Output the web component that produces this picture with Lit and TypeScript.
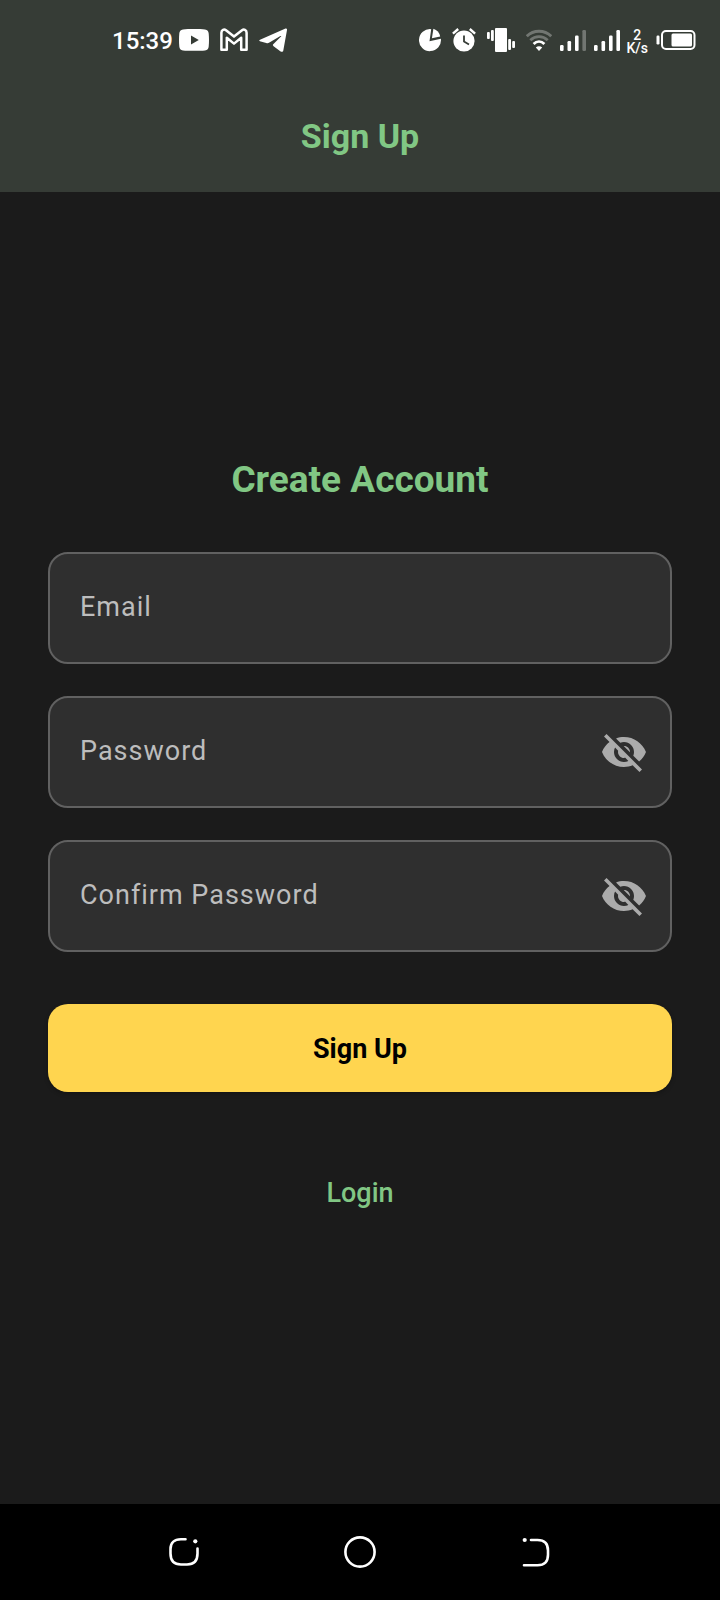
import { LitElement, html, css, svg } from "lit";
import { customElement, property, state } from "lit/decorators.js";

const visibilityOff = svg`<path d="M12 7c2.76 0 5 2.24 5 5 0 .65-.13 1.26-.36 1.83l2.92 2.92c1.51-1.26 2.7-2.89 3.43-4.75-1.73-4.39-6-7.5-11-7.5-1.4 0-2.74.25-3.98.7l2.16 2.16C10.74 7.13 11.35 7 12 7zM2 4.27l2.28 2.28.46.46C3.08 8.3 1.78 10.02 1 12c1.73 4.39 6 7.5 11 7.5 1.55 0 3.03-.3 4.38-.84l.42.42L19.73 22 21 20.73 3.27 3 2 4.27zM7.53 9.8l1.55 1.55c-.05.21-.08.43-.08.65 0 1.66 1.34 3 3 3 .22 0 .44-.03.65-.08l1.55 1.55c-.67.33-1.41.53-2.2.53-2.76 0-5-2.24-5-5 0-.79.2-1.53.53-2.2zm4.31-.78l3.15 3.15.02-.16c0-1.66-1.34-3-3-3l-.17.01z"/>`;
const visibilityOn = svg`<path d="M12 4.5C7 4.5 2.73 7.61 1 12c1.73 4.39 6 7.5 11 7.5s9.27-3.11 11-7.5c-1.73-4.39-6-7.5-11-7.5zM12 17c-2.76 0-5-2.24-5-5s2.24-5 5-5 5 2.24 5 5-2.24 5-5 5zm0-8c-1.66 0-3 1.34-3 3s1.34 3 3 3 3-1.34 3-3-1.34-3-3-3z"/>`;

@customElement("status-bar")
export class StatusBar extends LitElement {
  static styles = css`
    :host {
      display: flex;
      justify-content: space-between;
      align-items: center;
      height: 80px;
      padding: 0 24px 0 112px;
      color: #fff;
      font-family: Roboto, sans-serif;
    }
    .group {
      display: flex;
      align-items: center;
    }
    .apps {
      gap: 11px;
    }
    .clock {
      font-size: 24px;
      line-height: 28px;
      font-weight: 500;
      padding-top: 2px;
      margin-right: -5px;
    }
    .system {
      gap: 8px;
    }
    .alerts {
      gap: 11px;
    }
    .speed {
      font-size: 14px;
      line-height: 13px;
      font-weight: 500;
      text-align: center;
      padding-top: 3px;
      margin-left: -2px;
    }
    svg {
      display: block;
      fill: currentColor;
    }
  `;

  render() {
    return html`
      <div class="group apps">
        <time class="clock">15:39</time>
        <svg width="30" height="24" viewBox="0 0 30 24" aria-label="YouTube">
          <path fill-rule="evenodd" d="M4 1.4C9 .8 21 .8 26 1.4c2.500.3 3.500 1.600 3.700 4 .4 4 .4 9 0 13-.2 2.400-1.200 3.700-3.700 4-5 .6-17 .6-22 0-2.500-.3-3.500-1.600-3.700-4-.4-4-.4-9 0-13C.5 3 1.500 1.700 4 1.400zM12 7.400v9l7.800-4.500z"/>
        </svg>
        <svg width="28" height="24" viewBox="0 0 28 24" aria-label="Gmail">
          <path fill="none" stroke="currentColor" stroke-width="2.500" stroke-linejoin="round" d="M1.400 21.800V4.800C1.400 1.600 4.200.9 6 2.200l8 6.400 8-6.400c1.800-1.300 4.600-.6 4.600 2.600v17h-5.400V9.800L14 15.600 6.800 9.800v12z"/>
        </svg>
        <svg width="28" height="24" viewBox="0 0 28 24" aria-label="Telegram">
          <path d="M1 11.800 26.500.6c1-.4 1.700.2 1.500 1.300l-3.700 20.500c-.3 1.500-1.500 1.800-2.700 1l-7-5.200c-1-.8-1-1.500-.1-2.300L22 8.600c.5-.6 0-.9-.6-.5L10 14.800c-1 .6-1.700.5-2.800.2L.9 13.200c-1-.4-1-.9.100-1.400z"/>
        </svg>
      </div>
      <div class="group system">
        <div class="group alerts">
          <svg width="22" height="24" viewBox="0 0 22 24" aria-label="Data usage">
            <path d="M12.200 1.200A11 11 0 1 0 21.900 10.800L10.500 13.200z"/>
            <path d="M14.400.8A10.600 10.600 0 0 1 21.200 8.400L12.900 10.300z"/>
          </svg>
          <svg width="24" height="24" viewBox="0 0 24 24" aria-label="Alarm">
            <circle cx="12" cy="13" r="10.600"/>
            <path fill="none" stroke="currentColor" stroke-width="2.400" d="M.9 5.600 6.200 1M23.100 5.600 17.800 1"/>
            <path fill="none" stroke="#363c36" stroke-width="1.800" d="M12 7.500v6l5 3"/>
          </svg>
          <svg width="28" height="24" viewBox="0 0 28 24" aria-label="Vibrate">
            <rect x="8" width="12" height="24" rx="1"/>
            <rect y="4" width="2.800" height="7" rx="1"/>
            <rect x="4" y="2" width="2.800" height="11" rx="1"/>
            <rect x="21.200" y="11" width="2.800" height="11" rx="1"/>
            <rect x="25.200" y="13" width="2.800" height="7" rx="1"/>
          </svg>
          <svg width="26" height="24" viewBox="0 0 26 24" aria-label="Wi-Fi">
            <g fill="none" stroke="currentColor" stroke-width="2.800">
              <path opacity=".3" d="M.8 8.200C7.500 1.600 18.500 1.600 25.200 8.200"/>
              <path opacity=".3" d="M4.300 12.200c5-4.700 12.400-4.700 17.400 0"/>
              <path d="M7.600 16c3.200-3.100 7.600-3.100 10.800 0"/>
            </g>
            <path d="M9.800 19.400c1.900-1.700 4.500-1.700 6.400 0L13 23z"/>
          </svg>
        </div>
        ${[0.3, 1].map(
          (last) => svg`<svg width="26" height="24" viewBox="0 0 26 24" aria-label="Mobile signal">
            <rect y="17" width="3.600" height="6" rx="1.200"/>
            <rect x="7.500" y="13" width="3.600" height="10" rx="1.200"/>
            <rect x="15" y="7.500" width="3.600" height="15.500" rx="1.200"/>
            <rect x="22.400" y="2" width="3.600" height="21" rx="1.200" opacity=${last}/>
          </svg>`
        )}
        <div class="speed">2<br />K/s</div>
        <svg width="40" height="20" viewBox="0 0 40 20" aria-label="Battery">
          <rect x=".5" y="5.500" width="3" height="9" rx="1.200"/>
          <rect x="6" y="1" width="32.500" height="18" rx="4" fill="none" stroke="currentColor" stroke-width="2"/>
          <rect x="15.500" y="3.500" width="20.500" height="13" rx="1.500"/>
        </svg>
      </div>
    `;
  }
}

@customElement("outlined-field")
export class OutlinedField extends LitElement {
  @property() label = "";
  @property() type = "text";
  @state() private value = "";
  @state() private revealed = false;

  static styles = css`
    :host {
      display: block;
      font-family: Roboto, sans-serif;
    }
    .box {
      display: flex;
      align-items: center;
      box-sizing: border-box;
      height: 112px;
      padding: 0 22px 0 30px;
      background: #2f2f2f;
      border: 2px solid #616161;
      border-radius: 20px;
    }
    .box:focus-within {
      border-color: #81c784;
    }
    .entry {
      display: grid;
      flex: 1;
      align-items: center;
      padding-bottom: 2px;
    }
    .label,
    .input {
      grid-area: 1 / 1;
      font: 400 27px/36px Roboto, sans-serif;
      letter-spacing: 1px;
      color: #bdbdbd;
    }
    .label {
      pointer-events: none;
      z-index: 1;
    }
    .filled {
      opacity: 0;
    }
    .input {
      width: 100%;
      box-sizing: border-box;
      padding: 0;
      border: 0;
      outline: 0;
      background: none;
      color: #fff;
    }
    .toggle {
      padding: 0;
      border: 0;
      background: none;
      color: #ababab;
      cursor: pointer;
    }
    .eye {
      display: block;
      width: 48px;
      height: 48px;
      fill: currentColor;
    }
  `;

  render() {
    const secret = this.type === "password";
    return html`
      <div class="box">
        <div class="entry">
          <label class="label ${this.value ? "filled" : ""}" for="input">${this.label}</label>
          <input
            class="input"
            id="input"
            type=${secret && this.revealed ? "text" : this.type}
            @input=${(e: Event) => (this.value = (e.target as HTMLInputElement).value)}
          />
        </div>
        ${secret
          ? html`<button
              class="toggle"
              type="button"
              aria-label=${this.revealed ? "Hide password" : "Show password"}
              @click=${() => (this.revealed = !this.revealed)}
            >
              <svg class="eye" viewBox="0 0 24 24">${this.revealed ? visibilityOn : visibilityOff}</svg>
            </button>`
          : null}
      </div>
    `;
  }
}

@customElement("navigation-bar")
export class NavigationBar extends LitElement {
  static styles = css`
    :host {
      display: grid;
      grid-template-columns: repeat(3, 1fr);
      height: 96px;
      padding: 0 96px;
      background: #000;
    }
    .key {
      display: grid;
      place-items: center;
      padding: 0;
      border: 0;
      background: none;
      color: #fff;
    }
    .glyph {
      display: block;
      fill: none;
      stroke: currentColor;
      stroke-width: 2.6;
      stroke-linecap: round;
    }
    .dot {
      fill: currentColor;
      stroke: none;
    }
  `;

  render() {
    return html`
      <button class="key" aria-label="Recent apps">
        <svg class="glyph" width="32" height="32" viewBox="0 0 32 32">
          <path d="M17.500 3.300H13C6 3.300 2.500 7 2.500 13v4.500c0 7 3.500 11 10.500 11h6c7 0 10.500-4 10.500-11V12.500"/>
          <circle class="dot" cx="27.300" cy="5.300" r="2.100"/>
        </svg>
      </button>
      <button class="key" aria-label="Home">
        <svg class="glyph" width="32" height="32" viewBox="0 0 32 32">
          <circle cx="16" cy="16" r="14.600"/>
        </svg>
      </button>
      <button class="key" aria-label="Back">
        <svg class="glyph" width="32" height="32" viewBox="0 0 32 32">
          <path d="M11 4h6.500c7 0 10.500 3.500 10.500 10.500v4.200c0 7-3.500 10.600-10.500 10.600H4"/>
          <circle class="dot" cx="4.700" cy="4" r="2.100"/>
        </svg>
      </button>
    `;
  }
}

@customElement("app-root")
export class AppRoot extends LitElement {
  static styles = css`
    :host {
      display: flex;
      flex-direction: column;
      min-height: 100vh;
      background: #1b1b1b;
      color: #81c784;
      font-family: Roboto, sans-serif;
    }
    .header {
      background: #363c36;
    }
    .title {
      margin: 0;
      padding: 36px 0;
      font-size: 34px;
      line-height: 40px;
      font-weight: 700;
      text-align: center;
    }
    .main {
      flex: 1;
      display: flex;
      flex-direction: column;
      justify-content: center;
      padding: 0 48px;
    }
    .heading {
      margin: 0 0 48px;
      font-size: 37px;
      line-height: 48px;
      font-weight: 700;
      text-align: center;
    }
    .form {
      display: flex;
      flex-direction: column;
      gap: 32px;
    }
    .submit {
      height: 88px;
      margin: 20px 0 4px;
      padding: 2px 32px 0;
      border: 0;
      border-radius: 20px;
      background: #ffd54f;
      box-shadow: 0 2px 4px rgba(0, 0, 0, 0.25);
      color: #000;
      font: 700 27px/36px Roboto, sans-serif;
      cursor: pointer;
    }
    .login {
      align-self: center;
      margin-top: 48px;
      padding: 31px 24px 29px;
      color: inherit;
      font-size: 27px;
      line-height: 36px;
      font-weight: 500;
      text-decoration: none;
    }
  `;

  render() {
    return html`
      <header class="header">
        <status-bar></status-bar>
        <h1 class="title">Sign Up</h1>
      </header>
      <main class="main">
        <h2 class="heading">Create Account</h2>
        <form class="form" @submit=${(e: Event) => e.preventDefault()}>
          <outlined-field label="Email" type="email"></outlined-field>
          <outlined-field label="Password" type="password"></outlined-field>
          <outlined-field label="Confirm Password" type="password"></outlined-field>
          <button class="submit" type="submit">Sign Up</button>
        </form>
        <a class="login" href="#login">Login</a>
      </main>
      <navigation-bar></navigation-bar>
    `;
  }
}
